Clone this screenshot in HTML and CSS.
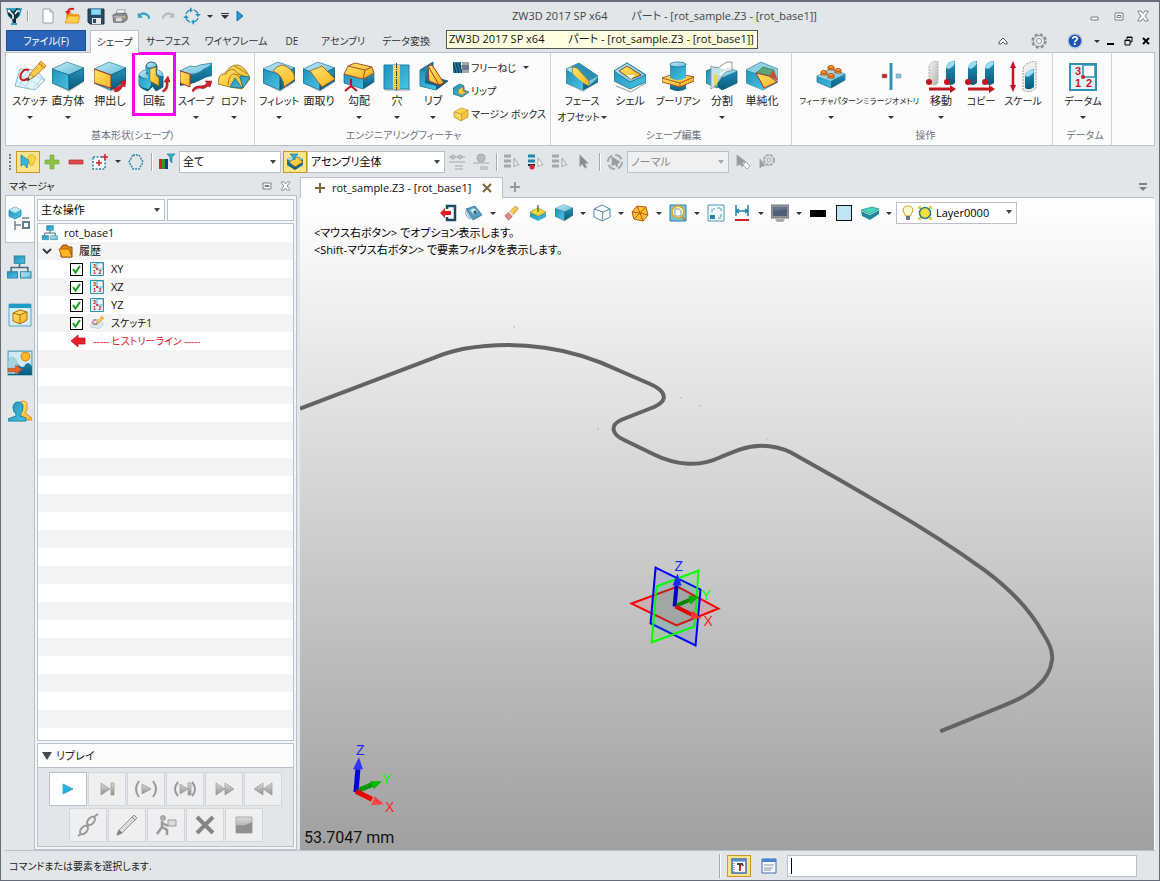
FILE: index.html
```html
<!DOCTYPE html>
<html lang="ja">
<head>
    <meta charset="utf-8">
    <meta name="viewport" content="width=device-width, initial-scale=1">
    <link rel="stylesheet" href="styles.css">
    <title>ZW3D 2017 SP x64</title>
</head>
<body>
    <!--SHARED GRADIENTS AND SYMBOLS-->
    <svg class="defs" width="0" height="0" aria-hidden="true">
        <defs>
            <linearGradient id="lt" x1="0" y1="0" x2="1" y2="1"><stop offset="0" stop-color="#c4eaf5"/><stop offset="1" stop-color="#62bedb"/></linearGradient>
            <linearGradient id="bl" x1="0" y1="0" x2="1" y2="1"><stop offset="0" stop-color="#2390b8"/><stop offset="1" stop-color="#48c4e6"/></linearGradient>
            <linearGradient id="dk" x1="0" y1="0" x2="0" y2="1"><stop offset="0" stop-color="#2593ba"/><stop offset="1" stop-color="#085a7c"/></linearGradient>
            <linearGradient id="gd" x1="0" y1="0" x2="1" y2="1"><stop offset="0" stop-color="#ffe66e"/><stop offset="1" stop-color="#fbb31c"/></linearGradient>
            <linearGradient id="gy" x1="0" y1="0" x2="1" y2="1"><stop offset="0" stop-color="#f4f4f4"/><stop offset="1" stop-color="#b4b4b4"/></linearGradient>
            <linearGradient id="rv" x1="0" y1="0" x2="0" y2="1"><stop offset="0" stop-color="#dcdcdc"/><stop offset="1" stop-color="#8f8f8f"/></linearGradient>
        </defs>
        <symbol id="box" viewBox="0 0 32 32">
            <path d="M1 23L17 31 32 21 17 27z" fill="#999" opacity=".5"/>
            <path d="M0 8L15 1 32 7 17 14z" fill="url(#lt)" stroke="#2c7f9c" stroke-width=".7"/>
            <path d="M0 8L17 14V29L0 22z" fill="url(#bl)" stroke="#0f6485" stroke-width=".7"/>
            <path d="M17 14L32 7V20L17 29z" fill="url(#dk)" stroke="#0a5270" stroke-width=".7"/>
        </symbol>
        <symbol id="sketch" viewBox="0 0 32 32">
            <path d="M6 8L22 9 31 19 21 29 1 25z" fill="#e3f3fa" stroke="#6ba8c4" stroke-width=".8"/>
            <path d="M4 14L25 24M9 8L30 19M3 20L16 28M14 9L5 25M21 10L11 27M28 17L18 29" stroke="#a9d3e5" stroke-width=".8"/>
            <path d="M15 9C9 7 5 14 7 18 9 21 13 18 14 17" fill="none" stroke="#c8141c" stroke-width="2"/>
            <path d="M13 20L16 13 27 0 32 5 20 16z" fill="url(#gd)" stroke="#b56a1c" stroke-width=".8"/>
            <path d="M13 20L16 13 20 16z" fill="#f8d9a8" stroke="#8b5a2b" stroke-width=".6"/>
            <path d="M13 20L14 17 16 18z" fill="#222"/>
            <path d="M25 2L30 7" stroke="#d9822b" stroke-width="1.5"/>
        </symbol>
        <symbol id="datum" viewBox="0 0 28 28">
            <path d="M1 1H27V27H1z" fill="#dff3fb" stroke="#2e92b6" stroke-width="2"/>
            <path d="M14 2H26V14H14z" fill="#fff" stroke="#2e92b6" stroke-width="1.500"/>
            <circle cx="14" cy="14" r="2" fill="#d2131b"/>
        </symbol>
        <symbol id="tree" viewBox="0 0 24 24">
            <path d="M12 8V12M4 16V12H20V16" fill="none" stroke="#4a6b80" stroke-width="1.500"/>
            <path d="M7 1H17V8H7z" fill="url(#bl)" stroke="#2386a9"/>
            <path d="M0 16H10V22H0z" fill="url(#bl)" stroke="#2386a9"/>
            <path d="M13 16H23V22H13z" fill="url(#lt)" stroke="#2386a9"/>
        </symbol>
        <symbol id="close" viewBox="0 0 12 12">
            <path d="M1 1H4L6 3.500 8 1H11V2L8 6 11 10V11H8L6 8.500 4 11H1V10L4 6 1 2z" fill="#fff" stroke="#7b7d80"/>
        </symbol>
        <symbol id="cursor" viewBox="0 0 12 18">
            <path d="M1 1V15L4 12 7 17 9 16 7 11H11z"/>
        </symbol>
    </svg>

    <div class="window">
        <!--TITLE BAR-->
        <header class="titlebar">
            <div class="quick">
                <svg class="logo" width="18" height="18" viewBox="0 0 18 18"><path d="M1 1H17L15 9 11 12H6L3 9z" fill="#2da4cc"/><path d="M2 3L5 2 8 5 12 1 16 3 13 10 11 12V16L8 17 7 12 3 8z" fill="#14303f"/><path d="M4 4L8 8V12M13 3L10 7" stroke="#fff" stroke-width="1.500" fill="none"/><circle cx="4" cy="4" r="1.500" fill="#fff"/><circle cx="14" cy="4" r="1.500" fill="#7ecfe8"/><path d="M6 17H12" stroke="#2da4cc" stroke-width="2"/></svg>
                <span class="divider"></span>
                <button class="icon-button" aria-label="新規"><svg width="18" height="18" viewBox="0 0 18 18"><path d="M4 2H11L14 5V16H4z" fill="#fff" stroke="#9aa0a8"/><path d="M11 2V5H14" fill="none" stroke="#9aa0a8"/></svg></button>
                <button class="icon-button" aria-label="開く"><svg width="18" height="18" viewBox="0 0 18 18"><path d="M3 6H9L10 7H16V16H3z" fill="#f0a01c"/><path d="M2 16L5 9H17L15 16z" fill="#ffcf4a" stroke="#d98a12" stroke-width=".7"/><path d="M11 2Q5 1 5 5" fill="none" stroke="#d2232a" stroke-width="2"/><path d="M2 4L5 8 8 4z" fill="#d2232a"/></svg></button>
                <button class="icon-button" aria-label="保存"><svg width="18" height="18" viewBox="0 0 18 18"><path d="M1 2H17V17H3L1 15z" fill="#2a4a66" stroke="#16303f"/><path d="M4 2H14V8H4z" fill="#4fc0e8"/><path d="M5 4H13M5 6H13" stroke="#d9f2fb"/><path d="M5 11H14V17H5z" fill="#e7e7e7"/><path d="M6 12H9V16H6z" fill="#2a4a66"/></svg></button>
                <button class="icon-button" aria-label="印刷"><svg width="16" height="16" viewBox="0 0 18 18"><path d="M6 2H15L13 8H4z" fill="#f5f5f5" stroke="#999"/><path d="M1 8L5 6H16L17 9V13L13 16H2z" fill="#8d8d8d" stroke="#666"/><path d="M2 10H13" stroke="#ccc"/><path d="M5 11H11V15H4z" fill="#ddd"/><circle cx="14" cy="10" r="1" fill="#e7d13a"/></svg></button>
                <button class="icon-button" aria-label="元に戻す"><svg width="16" height="16" viewBox="0 0 18 18"><path d="M4 8Q9 4 14 9L15 12" fill="none" stroke="#3aa0c6" stroke-width="2.500"/><path d="M2 5V11H8z" fill="#3aa0c6"/></svg></button>
                <button class="icon-button" aria-label="やり直し"><svg width="16" height="16" viewBox="0 0 18 18"><path d="M14 8Q9 4 4 9L3 12" fill="none" stroke="#b7bbc0" stroke-width="2.500"/><path d="M16 5V11H10z" fill="#b7bbc0"/></svg></button>
                <button class="icon-button" aria-label="再生成"><svg width="18" height="18" viewBox="0 0 18 18"><g fill="none" stroke="#2e9ac4" stroke-width="1.500"><path d="M3 7Q4 4 7 3M11 3Q14 4 15 7M15 11Q14 14 11 15M7 15Q4 14 3 11"/></g><path d="M7 0L10 3 7 6zM18 7L15 10 12 7zM11 18L8 15 11 12zM0 11L3 8 6 11z" fill="#2e9ac4"/></svg></button>
                <button class="caret-button" aria-label="再生成オプション"><span class="caret"></span></button>
                <button class="caret-button bar" aria-label="カスタマイズ"><span class="caret"></span></button>
                <button class="caret-button" aria-label="実行"><svg width="8" height="12" viewBox="0 0 8 12"><path d="M1 1L7 6 1 11z" fill="#1f9be0" stroke="#1377b8"/></svg></button>
            </div>
            <h1 class="title">ZW3D 2017 SP x64<span>パート - [rot_sample.Z3 - [rot_base1]]</span></h1>
            <div class="window-buttons">
                <button class="icon-button" aria-label="最小化"><svg width="10" height="12" viewBox="0 0 10 12"><path d="M1 7H8V10H1z" fill="#fff" stroke="#7b7d80"/></svg></button>
                <button class="icon-button" aria-label="最大化"><svg width="10" height="10" viewBox="0 0 10 10"><path d="M1 2H9V9H1z" fill="#fff" stroke="#7b7d80"/><path d="M3 4.500H7V6.500H3z" fill="none" stroke="#7b7d80"/></svg></button>
                <button class="icon-button" aria-label="閉じる"><svg width="12" height="12"><use href="#close"/></svg></button>
            </div>
        </header>

        <!--RIBBON TABS-->
        <nav class="tabs">
            <button class="tab file">ファイル(F)</button>
            <button class="tab active">シェープ</button>
            <button class="tab">サーフェス</button>
            <button class="tab">ワイヤフレーム</button>
            <button class="tab narrow">DE</button>
            <button class="tab short">アセンブリ</button>
            <button class="tab">データ変換</button>
            <div class="tab-tools">
                <button class="icon-button" aria-label="リボンを隠す"><svg width="10" height="8" viewBox="0 0 10 8"><path d="M1 5L5 1 9 5V7H7L5 5 3 7H1z" fill="#fff" stroke="#555"/></svg></button>
                <button class="icon-button" aria-label="設定"><svg width="16" height="16" viewBox="0 0 16 16"><circle cx="8" cy="8" r="6.500" fill="none" stroke="#8e9194" stroke-width="2.500" stroke-dasharray="3 2.100"/><circle cx="8" cy="8" r="5.500" fill="#e8e8e8" stroke="#8e9194"/><circle cx="8" cy="8" r="2.500" fill="#fff" stroke="#8e9194"/></svg></button>
                <button class="icon-button" aria-label="ヘルプ"><svg width="16" height="16" viewBox="0 0 16 16"><circle cx="8" cy="8" r="7" fill="#1c50b4" stroke="#b9c7dd" stroke-width="1.500"/><text class="help" x="8" y="12">?</text></svg></button>
                <button class="caret-button" aria-label="ヘルプメニュー"><span class="caret"></span></button>
                <button class="mini" aria-label="文書を最小化"><svg width="8" height="10" viewBox="0 0 8 10"><path d="M1 8H8" stroke="#000" stroke-width="2"/></svg></button>
                <button class="mini" aria-label="文書を復元"><svg width="9" height="10" viewBox="0 0 9 10"><path d="M3 3V1H8V6H6M3 1.500H8" fill="none" stroke="#000"/><path d="M1 4H6V9H1zM1 4.500H6" fill="none" stroke="#000"/></svg></button>
                <button class="mini" aria-label="文書を閉じる"><svg width="8" height="8" viewBox="0 0 8 8"><path d="M1 1L7 7M7 1L1 7" stroke="#000" stroke-width="2"/></svg></button>
            </div>
            <div class="tooltip" role="tooltip">ZW3D 2017 SP x64<span>パート - [rot_sample.Z3 - [rot_base1]]</span></div>
        </nav>

        <!--RIBBON-->
        <section class="ribbon">
            <div class="group">
                <div class="tools">
                    <button class="tool w36"><svg width="32" height="32"><use href="#sketch"/></svg><span class="kana">スケッチ</span><i class="caret"></i></button>
                    <button class="tool w40"><svg width="32" height="32"><use href="#box"/></svg><span>直方体</span><i class="caret"></i></button>
                    <button class="tool w44"><svg width="32" height="32" viewBox="0 0 32 32"><use href="#box"/><path d="M0 8L17 14V27L0 22z" fill="url(#gd)" stroke="#a8322a"/><path d="M19 27Q26 26 28 23L26 21 32 19 31 26 29 25Q26 31 21 31z" fill="#d0202a" stroke="#8a1016" stroke-width=".5"/></svg><span>押出し</span></button>
                    <button class="tool w44 marked"><svg width="32" height="32" viewBox="0 0 32 32"><path d="M1 14Q2 10 8 9V5Q9 1 13 1 18 1 19 5V9Q25 10 25 15V26L18 30 15 26V25L10 30Q1 27 1 23z" fill="url(#dk)" stroke="#0b4f6d" stroke-width=".8"/><path d="M1 14Q2 10 8 9V13L13 16Q8 20 1 14z" fill="url(#lt)"/><path d="M8 5Q9 1 13 1 18 1 19 5L14 7Q10 8 8 5z" fill="url(#lt)" stroke="#0b4f6d" stroke-width=".7"/><path d="M19 9Q25 10 25 15L22 15 19 13z" fill="url(#lt)"/><path d="M8 6Q10 8 13 8V24L11 28Q3 27 1 23V16Q5 19 10 17V12L8 11z" fill="url(#bl)"/><path d="M12 8L18 6V14L21 17V25L12 20z" fill="url(#gd)" stroke="#8a5a13" stroke-width=".6"/><path d="M24 30Q29 27 28 21H26L30 15 32 21H30Q31 28 26 31z" fill="#d0202a" stroke="#8a1016" stroke-width=".5"/></svg><span>回転</span></button>
                    <button class="tool w40"><svg width="32" height="32" viewBox="0 0 32 32"><path d="M0 10L10 5Q15 7 20 4L32 2 32 15Q25 16 21 19 15 22 10 23L0 25z" fill="url(#dk)"/><path d="M0 10L10 5Q15 7 20 4L32 2Q30 6 24 8 17 14 10 13z" fill="url(#lt)" stroke="#27809f" stroke-width=".7"/><path d="M0 10L10 13V26L0 22z" fill="url(#gd)" stroke="#a8322a"/><path d="M12 29Q16 24 20 25 25 25 27 22L25 20 32 20 30 26 28 25Q24 29 20 27 16 27 13 31z" fill="#d0202a" stroke="#8a1016" stroke-width=".5"/></svg><span class="kana">スイープ</span><i class="caret"></i></button>
                    <button class="tool w36"><svg width="32" height="32" viewBox="0 0 32 32"><path d="M0 23Q0 13 6 13 13 3 20 4 28 6 32 18L24 28 12 26z" fill="url(#gd)" stroke="#8f6413" stroke-width=".8"/><path d="M10 24Q11 12 17 13 23 14 25 27M7 14Q14 3 20 13L32 17M16 5Q25 9 29 13" fill="none" stroke="#8f6413" stroke-width=".8"/><path d="M12 26L17 17 24 27zM22 15L32 16 25 27z" fill="url(#bl)" stroke="#0f6485" stroke-width=".7"/></svg><span class="kana">ロフト</span><i class="caret"></i></button>
                </div>
                <h2>基本形状(シェープ)</h2>
            </div>

            <div class="group g2">
                <div class="tools">
                    <button class="tool w40"><svg width="32" height="32" viewBox="0 0 32 32"><use href="#box"/><path d="M10 10Q13 5 19 4 31 7 32 18L21 26Q20 14 10 10z" fill="url(#gd)" stroke="#a8502a" stroke-width=".8"/></svg><span class="kana">フィレット</span><i class="caret"></i></button>
                    <button class="tool w40"><svg width="32" height="32" viewBox="0 0 32 32"><use href="#box"/><path d="M7 10L19 5 32 18 19 26z" fill="url(#gd)" stroke="#a8502a" stroke-width=".8"/></svg><span>面取り</span></button>
                    <button class="tool w40"><svg width="32" height="32" viewBox="0 0 32 32"><path d="M1 13L20 18 31 12V21L20 28 1 22z" fill="url(#bl)" stroke="#0f6485" stroke-width=".7"/><path d="M20 18L31 12V21L20 28z" fill="url(#dk)"/><path d="M1 13L5 5 12 2 29 6 31 12 20 18z" fill="url(#gd)" stroke="#a8502a"/><path d="M5 5L22 9 20 18M22 9L29 6" fill="none" stroke="#a8502a"/><path d="M8 18V25M8 25L2 30M8 25L14 30" stroke="#b8131c" stroke-width="2"/></svg><span>勾配</span><i class="caret"></i></button>
                    <button class="tool w36"><svg width="32" height="32" viewBox="0 0 32 32"><path d="M3 4H28V28H3z" fill="url(#bl)" stroke="#1a7fa8"/><path d="M12 4H19V28H12z" fill="url(#gd)"/><path d="M15.500 2V30" stroke="#444" stroke-dasharray="5 1 1 1"/><path d="M4 29H29V28" stroke="#999" fill="none"/></svg><span>穴</span><i class="caret"></i></button>
                    <button class="tool w36"><svg width="32" height="32" viewBox="0 0 32 32"><path d="M3 9L16 1V16L31 20 19 29 3 25z" fill="url(#dk)" stroke="#0b4f6d" stroke-width=".8"/><path d="M3 9L8 11V22L19 25V29L3 25z" fill="url(#bl)"/><path d="M11 5L15 4 27 22 22 24 12 20z" fill="url(#gd)" stroke="#a8322a"/><path d="M11 5L22 24" stroke="#a8322a"/></svg><span>リブ</span><i class="caret"></i></button>
                    <div class="stack">
                        <button><svg width="16" height="16" viewBox="0 0 16 16"><path d="M0 2L8 2V13H0z" fill="#2386a9"/><path d="M0 3L3 13M3 3L6 13M6 3L9 13" stroke="#0b3f5a" stroke-width="1.500"/><path d="M9 2H16V13H9z" fill="#a4a8ab"/><path d="M8 5L16 5V10H10z" fill="#6a7a86"/></svg>フリーねじ<i class="caret"></i></button>
                        <button><svg width="16" height="16" viewBox="0 0 16 16"><path d="M0 5L7 1 11 3V7L16 9 9 14 0 11z" fill="url(#bl)" stroke="#0f6485" stroke-width=".7"/><path d="M6 6L10 4V8L14 9 9 12 5 10z" fill="url(#gd)" stroke="#b0702a" stroke-width=".7"/></svg>リップ</button>
                        <button><svg width="16" height="16" viewBox="0 0 16 16"><path d="M1 6L8 2 15 4V11L8 15 1 11z" fill="url(#gd)" stroke="#c49a35" stroke-width=".8"/><path d="M1 6L9 8 15 4M9 8L8 15" fill="none" stroke="#c49a35" stroke-width=".8"/><path d="M4 9L7 10V13" stroke="#fff3b0" fill="none"/></svg>マージン ボックス</button>
                    </div>
                </div>
                <h2>エンジニアリングフィーチャ</h2>
            </div>

            <div class="group g3">
                <div class="tools">
                    <button class="tool w48"><svg width="32" height="32" viewBox="0 0 32 32"><path d="M1 23L17 31 32 21 17 27z" fill="#999" opacity=".5"/><path d="M0 8L13 2 32 15V21L17 29 0 22z" fill="url(#lt)" stroke="#0f6485" stroke-width=".7"/><path d="M13 2L32 15 23 20 5 6z" fill="#2d8fb2"/><path d="M6 6L11 7 23 20V26L7 15z" fill="url(#gd)" stroke="#8a7a3a" stroke-width=".8"/><path d="M0 8L6 12 17 22V29L0 22z" fill="url(#bl)"/><path d="M17 22L23 25 32 16V21L17 29z" fill="url(#dk)"/></svg><span class="kana">フェース</span><span class="kana">オフセット<i class="caret"></i></span></button>
                    <button class="tool w48"><svg width="32" height="32" viewBox="0 0 32 32"><path d="M2 25L17 31 32 22" fill="none" stroke="#999"/><path d="M0 10L13 2 32 14V21L16 28 0 20z" fill="url(#bl)" stroke="#0f6485" stroke-width=".7"/><path d="M0 10L13 2 32 14 16 21z" fill="url(#lt)" stroke="#0f6485" stroke-width=".7"/><path d="M5 10L13 5 27 14 17 18z" fill="url(#gd)" stroke="#8a4d13"/><path d="M12 14L21 14 17 18z" fill="#fff"/></svg><span>シェル</span></button>
                    <button class="tool w48"><svg width="32" height="32" viewBox="0 0 32 32"><path d="M8 22V28Q16 32 24 28V22z" fill="url(#dk)"/><path d="M0 17L14 12 32 16V20L18 26 0 21z" fill="url(#gd)" stroke="#a8502a"/><path d="M0 17L18 22 32 16M18 22V26" fill="none" stroke="#a8502a"/><path d="M8 3V17Q16 21 24 17V3z" fill="url(#bl)"/><ellipse cx="16" cy="3.500" rx="8" ry="2.500" fill="url(#lt)" stroke="#0f6485" stroke-width=".7"/></svg><span class="kana">ブーリアン</span></button>
                    <button class="tool w40"><svg width="32" height="32" viewBox="0 0 32 32"><path d="M0 10L9 6 18 9V20L11 27 0 22z" fill="url(#bl)" stroke="#0f6485" stroke-width=".7"/><path d="M12 13L22 7 31 10V22L16 29 12 26z" fill="url(#dk)" stroke="#0b4f6d" stroke-width=".7"/><path d="M12 13L22 7 31 10 17 16z" fill="url(#lt)"/><path d="M5 5Q12 9 16 4 20 0 26 1V10Q20 9 17 14L10 24 5 28z" fill="#fff" fill-opacity=".7" stroke="#9a9a9a"/><path d="M8 14L11 13V24H8z" fill="#f9cf5c"/></svg><span>分割</span><i class="caret"></i></button>
                    <button class="tool w40"><svg width="32" height="32" viewBox="0 0 32 32"><path d="M0 9L15 1 32 8V21L17 29 0 22z" fill="#8fd0e4" stroke="#3b8ca8" stroke-width=".8"/><path d="M0 9L10 12 19 29 0 22z" fill="url(#bl)"/><path d="M10 12L17 6 28 9 23 15z" fill="#5ba47c" stroke="#3a7a50" stroke-width=".7"/><path d="M10 12L23 15 31 21 18 27z" fill="url(#gd)" stroke="#a8322a"/><path d="M23 15L28 9 32 20z" fill="#c45038"/></svg><span>単純化</span></button>
                </div>
                <h2>シェープ編集</h2>
            </div>

            <div class="group g4">
                <div class="tools">
                    <button class="tool w60"><svg width="32" height="32" viewBox="0 0 32 32"><path d="M2 15L16 8 30 13V19L16 27 2 21z" fill="url(#bl)" stroke="#0f6485" stroke-width=".7"/><path d="M2 15L16 8 30 13 16 20z" fill="url(#lt)"/><path d="M16 20L30 13V19L16 27z" fill="url(#dk)"/><g fill="#fba51c" stroke="#b03a18" stroke-width=".8"><path d="M13 6V9H19V6zM6 11V14H12V11zM20 9V12H26V9zM13 14V17H19V14z"/><ellipse cx="16" cy="6" rx="3" ry="1.500"/><ellipse cx="9" cy="11" rx="3" ry="1.500"/><ellipse cx="23" cy="9" rx="3" ry="1.500"/><ellipse cx="16" cy="14" rx="3" ry="1.500"/></g></svg><span class="long">フィーチャパターン</span><i class="caret"></i></button>
                    <button class="tool w60"><svg width="32" height="32" viewBox="0 0 32 32"><path d="M16 2V29" stroke="#2f93bd" stroke-width="3"/><path d="M7 13H12V17H7z" fill="#d0202a" stroke="#999" stroke-width=".6"/><path d="M21 13H26V17H21z" fill="#7fc4e0" stroke="#999" stroke-width=".6"/></svg><span class="long">ミラージオメトリ</span><i class="caret"></i></button>
                    <button class="tool w40"><svg width="32" height="32" viewBox="0 0 32 32"><path d="M4 22V5Q6 0 13 0V22Q9 26 4 22z" fill="url(#gy)" stroke="#aaa" stroke-dasharray="2 1"/><path d="M21 22V6Q23 0 30 0V22Q26 26 21 22z" fill="url(#dk)"/><ellipse cx="25.500" cy="4" rx="5" ry="2.500" fill="#9bdcf0" transform="rotate(-38 25.500 4)"/><path d="M4 26.500H25V24L31 28 25 32V29.500H4z" fill="#c4161f"/><circle cx="4" cy="21" r="3" fill="#c4161f"/><circle cx="22" cy="21" r="3" fill="#c4161f"/></svg><span>移動</span><i class="caret"></i></button>
                    <button class="tool w40"><svg width="32" height="32" viewBox="0 0 32 32"><path d="M3 22V6Q5 0 12 0V22Q8 26 3 22zM20 22V6Q22 0 29 0V22Q25 26 20 22z" fill="url(#dk)"/><ellipse cx="7.500" cy="4" rx="5" ry="2.500" fill="#9bdcf0" transform="rotate(-38 7.500 4)"/><ellipse cx="24.500" cy="4" rx="5" ry="2.500" fill="#9bdcf0" transform="rotate(-38 24.500 4)"/><path d="M3 26.500H24V24L30 28 24 32V29.500H3z" fill="#c4161f"/><circle cx="3" cy="21" r="3" fill="#c4161f"/><circle cx="20" cy="21" r="3" fill="#c4161f"/></svg><span class="kana">コピー</span></button>
                    <button class="tool w44"><svg width="32" height="32" viewBox="0 0 32 32"><path d="M6 6V25" stroke="#c4161f" stroke-width="2.500"/><path d="M3 7L6 0 9 7zM3 24L6 31 9 24z" fill="#c4161f"/><path d="M16 29V8Q18 1 29 0V27Q23 33 16 29z" fill="#eee" stroke="#999" stroke-dasharray="2 1"/><path d="M18 27V14Q20 9 27 8V26Q22 30 18 27z" fill="url(#dk)"/><ellipse cx="22.500" cy="12" rx="5" ry="2.500" fill="#9bdcf0" transform="rotate(-38 22.500 12)"/></svg><span class="kana">スケール</span></button>
                </div>
                <h2>操作</h2>
            </div>

            <div class="group g5">
                <div class="tools">
                    <button class="tool w44"><svg class="datum-icon" width="28" height="28" viewBox="0 0 28 28"><use href="#datum"/><g class="datum-text"><text x="6" y="12">3</text><text x="6" y="24">1</text><text x="17" y="24">2</text></g></svg><span class="kana">データム</span><i class="caret"></i></button>
                </div>
                <h2>データム</h2>
            </div>
        </section>

        <!--SELECTION TOOLBAR-->
        <div class="toolbar">
            <span class="grip"></span>
            <button class="icon-button on" aria-label="選択"><svg width="18" height="18" viewBox="0 0 18 18"><path d="M2 2V13L5 11 8 15 9 10 12 9z" fill="#37b5da" stroke="#137ca3" stroke-width=".7"/><path d="M9 4A4 4 0 1 1 15 9L14 12H11L10 8z" fill="#ffd84a" stroke="#d59b15" stroke-width=".7"/></svg></button>
            <button class="icon-button" aria-label="追加"><svg width="16" height="16" viewBox="0 0 16 16"><path d="M6 1H10V6H15V10H10V15H6V10H1V6H6z" fill="#8bc53f" stroke="#7aa84a" stroke-width=".7"/></svg></button>
            <button class="icon-button" aria-label="除去"><svg width="16" height="16" viewBox="0 0 16 16"><path d="M1 6H15V10H1z" fill="#dd4a4c" stroke="#b5282e" stroke-width=".7"/></svg></button>
            <button class="icon-button" aria-label="ボックス選択"><svg width="16" height="16" viewBox="0 0 16 16"><path d="M1 3H13V15H1z" fill="#fff" stroke="#2386a9" stroke-dasharray="2 1.500" stroke-width="1.500"/><path d="M7 6V12M4 9H10M13 0V6M10 3H16" stroke="#d2232a" stroke-width="1.500"/></svg></button>
            <button class="caret-button" aria-label="選択方法"><span class="caret"></span></button>
            <button class="icon-button" aria-label="多角形選択"><svg width="16" height="16" viewBox="0 0 16 16"><path d="M5 1H11L15 8 11 15H5L1 8z" fill="none" stroke="#2a8bb0" stroke-width="1.500" stroke-dasharray="2 1"/></svg></button>
            <span class="divider"></span>
            <button class="icon-button" aria-label="色フィルタ"><svg width="18" height="18" viewBox="0 0 18 18"><path d="M1 6H4V16H1z" fill="#d2232a"/><path d="M4 6H7V16H4z" fill="#35932c"/><path d="M7 6H10V16H7z" fill="#1c3a8e"/><path d="M9 1H17L14 4V10L12 8V4z" fill="#36aed4" stroke="#1b7b9c" stroke-width=".7"/></svg></button>
            <label class="combo c102"><select aria-label="フィルタ"><option>全て</option></select></label>
            <button class="icon-button on" aria-label="範囲"><svg width="18" height="18" viewBox="0 0 18 18"><path d="M1 6L9 2 17 6V12L9 17 1 12z" fill="url(#dk)"/><path d="M1 6L9 2 17 6 9 11z" fill="url(#lt)"/><path d="M3 9L11 4 17 9 9 14z" fill="url(#gd)" stroke="#8a5a13" stroke-width=".7"/><path d="M4 1H12L9 4V7L7 6V4z" fill="#36aed4" stroke="#1b7b9c" stroke-width=".7"/></svg></button>
            <label class="combo c138"><select aria-label="選択範囲"><option>アセンブリ全体</option></select></label>
            <button class="icon-button off" aria-label="参照" disabled><svg width="18" height="18" viewBox="0 0 18 18"><path d="M1 4H17M1 9H17M7 13H15M7 16H15"/><circle cx="5" cy="4" r="2"/><circle cx="12" cy="4" r="2"/></svg></button>
            <button class="icon-button off" aria-label="外部参照" disabled><svg width="18" height="18" viewBox="0 0 18 18"><path d="M1 10H17M8 14H16M8 16H16"/><circle cx="9" cy="5" r="4" fill="#bbb"/></svg></button>
            <span class="divider"></span>
            <button class="icon-button off" aria-label="リスト1" disabled><svg width="18" height="18" viewBox="0 0 18 18"><path d="M1 3H8M1 8H8M1 13H8" stroke-width="3"/><path d="M11 5V14L13 12 16 12z" fill="#eee"/></svg></button>
            <button class="icon-button" aria-label="リスト2"><svg width="18" height="18" viewBox="0 0 18 18"><path d="M1 3H8M1 8H8" stroke="#1d88ae" stroke-width="3"/><path d="M1 12H8" stroke="#17384a" stroke-width="2"/><circle cx="5" cy="14" r="2.500" fill="#d2232a"/><path d="M11 5V14L13 12 16 12z" fill="#fff" stroke="#aaa"/></svg></button>
            <button class="icon-button off" aria-label="リスト3" disabled><svg width="18" height="18" viewBox="0 0 18 18"><path d="M1 3H8M1 8H8M1 13H8" stroke-width="3"/><path d="M11 5V14L13 12 16 12z" fill="#eee"/></svg></button>
            <button class="icon-button off" aria-label="ポインタ" disabled><svg width="10" height="15"><use href="#cursor" fill="#8a8a8a"/></svg></button>
            <span class="divider"></span>
            <button class="icon-button off" aria-label="方向" disabled><svg width="18" height="18" viewBox="0 0 18 18"><circle cx="9" cy="9" r="7" stroke-width="2" stroke-dasharray="8 3"/><path d="M6 4V13L9 11 11 14 12 10 14 9z" fill="#999"/></svg></button>
            <label class="combo c102 disabled"><select aria-label="表示" disabled><option>ノーマル</option></select></label>
            <button class="icon-button off" aria-label="ピック" disabled><svg width="18" height="18" viewBox="0 0 18 18"><path d="M3 2V13L6 11 8 14 9 9H12z" fill="#999"/><path d="M9 12L12 9 16 13 13 16z" fill="#fff"/></svg></button>
            <button class="icon-button off" aria-label="ピック設定" disabled><svg width="18" height="18" viewBox="0 0 18 18"><circle cx="11" cy="7" r="5" stroke-width="2" stroke-dasharray="3 1"/><circle cx="11" cy="7" r="2"/><path d="M2 6V15L4 13 7 13z" fill="#999"/></svg></button>
        </div>

        <main class="main">
            <!--MANAGER-->
            <aside class="manager">
                <div class="manager-head">
                    <h2>マネージャ</h2>
                    <button class="mini" aria-label="フロート"><svg width="10" height="8" viewBox="0 0 10 8"><path d="M1 1H9V7H1z" fill="#fff" stroke="#7b7d80"/><path d="M3 3.500H7V4.500H3z" fill="none" stroke="#7b7d80"/></svg></button>
                    <button class="mini" aria-label="マネージャを閉じる"><svg width="11" height="10"><use href="#close"/></svg></button>
                </div>
                <div class="manager-body">
                    <nav class="side-tabs">
                        <button class="active" aria-label="履歴"><svg width="24" height="26" viewBox="0 0 24 26"><path d="M1 4L7 1 13 4V10L7 13 1 10z" fill="url(#bl)" stroke="#2a87a8" stroke-width=".8"/><path d="M1 4L7 1 13 4 7 7z" fill="#bfe8f5"/><path d="M14 12H21M7 15V24M7 19H13" stroke="#6a8496" stroke-width="1.500"/><path d="M15 16H21V22H15z" fill="#fff" stroke="#5f8096" stroke-width="2"/></svg></button>
                        <button aria-label="アセンブリ"><svg width="25" height="25"><use href="#tree"/></svg></button>
                        <button aria-label="ビュー"><svg width="24" height="24" viewBox="0 0 24 24"><path d="M1 1H23V23H1z" fill="#d5ecf5" stroke="#58a6c2"/><path d="M1 1H23V5H1z" fill="#1d9cc5"/><path d="M5 10L12 7 19 9V17L12 21 5 18z" fill="url(#gd)" stroke="#b06a13"/><path d="M5 10L12 12 19 9M12 12V21" fill="none" stroke="#b06a13"/></svg></button>
                        <button aria-label="ビジュアル"><svg width="26" height="26" viewBox="0 0 24 24"><path d="M1 1H23V23H1z" fill="#cdeaf5" stroke="#4d9cba"/><path d="M1 10Q5 3 8 9 12 18 16 15 19 9 23 15V23H1z" fill="url(#dk)"/><path d="M1 10Q5 3 8 9 12 16 10 22H1z" fill="#a7d3e2"/><circle cx="17" cy="6" r="4" fill="#fbb829" stroke="#d98610"/><path d="M1 17H8V14L14 18 8 22V20H1z" fill="#e8622a" stroke="#b8411a" stroke-width=".6"/></svg></button>
                        <button aria-label="ロール"><svg width="24" height="24" viewBox="0 0 24 24"><path d="M11 4Q15 0 19 4V11L17 14 24 19V21H14z" fill="url(#gd)" stroke="#d9902a"/><path d="M5 8Q6 3 10 3 15 3 15 8 15 13 12 15V17L18 19V22H0V20L8 17V15Q5 13 5 8z" fill="url(#bl)" stroke="#1a7fa8"/></svg></button>
                    </nav>
                    <div class="manager-content">
                        <div class="filter-row">
                            <label class="combo grow"><select aria-label="操作"><option>主な操作</option></select></label>
                            <input class="filter grow" type="text" aria-label="検索">
                        </div>
                        <ul class="tree">
                            <li><svg width="16" height="16"><use href="#tree"/></svg>rot_base1</li>
                            <li><svg width="10" height="8" viewBox="0 0 10 8"><path d="M1 2L5 6 9 2" fill="none" stroke="#333" stroke-width="1.800"/></svg><svg width="15" height="14" viewBox="0 0 15 14"><path d="M3 3L5 1H9L10 3H14V13H3z" fill="#d98a0c" stroke="#8f4a0c"/><path d="M1 5H11L14 13H4z" fill="#ffb91f" stroke="#b3620d"/></svg>履歴</li>
                            <li class="leaf"><input type="checkbox" id="xy" checked><svg width="14" height="14" viewBox="0 0 28 28"><use href="#datum"/><g class="datum-text"><text x="6" y="12">3</text><text x="6" y="24">1</text><text x="17" y="24">2</text></g></svg><label for="xy">XY</label></li>
                            <li class="leaf"><input type="checkbox" id="xz" checked><svg width="14" height="14" viewBox="0 0 28 28"><use href="#datum"/><g class="datum-text"><text x="6" y="12">3</text><text x="6" y="24">1</text><text x="17" y="24">2</text></g></svg><label for="xz">XZ</label></li>
                            <li class="leaf"><input type="checkbox" id="yz" checked><svg width="14" height="14" viewBox="0 0 28 28"><use href="#datum"/><g class="datum-text"><text x="6" y="12">3</text><text x="6" y="24">1</text><text x="17" y="24">2</text></g></svg><label for="yz">YZ</label></li>
                            <li class="leaf"><input type="checkbox" id="sk" checked><svg width="14" height="14"><use href="#sketch"/></svg><label class="kana" for="sk">スケッチ1</label></li>
                            <li class="leaf history"><svg width="16" height="14" viewBox="0 0 16 14"><path d="M1 7L8 1V4H15V10H8V13z" fill="#e8222c" stroke="#b0101a" stroke-width=".7"/></svg>----- ヒストリーライン -----</li>
                        </ul>
                        <h3 class="replay-title"><svg width="10" height="8" viewBox="0 0 10 8"><path d="M0 0H10L5 8z" fill="#444a52"/></svg>リプレイ</h3>
                        <div class="replay">
                            <div class="replay-row">
                                <button aria-label="再生"><svg width="24" height="24" viewBox="0 0 24 24"><path d="M7 7L17 12 7 17z" fill="#22b4e0" stroke="#4fa8c4"/></svg></button>
                                <button aria-label="次へ" disabled><svg width="24" height="24" viewBox="0 0 24 24"><path d="M6 6L15 12 6 18zM16 6H19V18H16z" fill="url(#rv)" stroke="#999" stroke-width=".7"/></svg></button>
                                <button aria-label="部分再生" disabled><svg width="24" height="24" viewBox="0 0 24 24"><path d="M8 7L17 12 8 17z" fill="url(#rv)" stroke="#999" stroke-width=".7"/><path d="M5 4Q-1 12 5 20M19 4Q25 12 19 20" fill="none" stroke="#999" stroke-width="2"/></svg></button>
                                <button aria-label="部分送り" disabled><svg width="24" height="24" viewBox="0 0 24 24"><path d="M7 7L15 12 7 17zM15 6H18V18H15z" fill="url(#rv)" stroke="#999" stroke-width=".7"/><path d="M5 5Q-1 12 5 19M19 5Q25 12 19 19" fill="none" stroke="#999" stroke-width="2"/></svg></button>
                                <button aria-label="早送り" disabled><svg width="24" height="24" viewBox="0 0 24 24"><path d="M4 6L13 12 4 18zM13 6L22 12 13 18z" fill="url(#rv)" stroke="#999" stroke-width=".7"/></svg></button>
                                <button aria-label="巻き戻し" disabled><svg width="24" height="24" viewBox="0 0 24 24"><path d="M12 6L3 12 12 18zM21 6L12 12 21 18z" fill="url(#rv)" stroke="#999" stroke-width=".7"/></svg></button>
                            </div>
                            <div class="replay-row">
                                <button aria-label="リンク" disabled><svg width="24" height="24" viewBox="0 0 24 24"><g fill="none" stroke="#999" stroke-width="2"><ellipse cx="8" cy="17" rx="5" ry="3" transform="rotate(-50 8 17)"/><ellipse cx="15" cy="8" rx="5" ry="3" transform="rotate(-50 15 8)"/><path d="M18 4L22 1M5 21L2 23M10 14L13 11"/></g></svg></button>
                                <button aria-label="編集" disabled><svg width="24" height="24" viewBox="0 0 24 24"><path d="M2 22L4 17 19 2 22 5 7 20z" fill="#ddd" stroke="#999"/><path d="M17 4L20 7M2 22L4 17 7 20z" stroke="#888" fill="#888"/></svg></button>
                                <button aria-label="移動" disabled><svg width="24" height="24" viewBox="0 0 24 24"><circle cx="9" cy="5" r="3" fill="#aaa"/><path d="M8 8V14L3 21M8 14L13 17V22M8 10L14 13" fill="none" stroke="#999" stroke-width="2.500"/><path d="M14 7H22V13H14z" fill="#ddd" stroke="#999"/></svg></button>
                                <button aria-label="削除" disabled><svg width="24" height="24" viewBox="0 0 24 24"><path d="M4 4L20 20M20 4L4 20" stroke="#858585" stroke-width="4"/></svg></button>
                                <button aria-label="停止" disabled><svg width="24" height="24" viewBox="0 0 24 24"><path d="M4 4H20V20H4z" fill="url(#rv)" stroke="#aaa"/><path d="M4 12Q12 14 20 9V20H4z" fill="#8f8f8f"/></svg></button>
                            </div>
                        </div>
                    </div>
                </div>
            </aside>

            <!--DOCUMENT-->
            <section class="document">
                <div class="doc-tabs">
                    <div class="doc-tab"><svg width="10" height="10" viewBox="0 0 10 10"><path d="M5 0V10M0 5H10" stroke="#7a6638" stroke-width="2"/></svg><span>rot_sample.Z3 - [rot_base1]</span><button class="mini" aria-label="タブを閉じる"><svg width="10" height="10" viewBox="0 0 10 10"><path d="M1 1L9 9M9 1L1 9" stroke="#7a6638" stroke-width="2"/></svg></button></div>
                    <button class="icon-button" aria-label="新しいタブ"><svg width="10" height="10" viewBox="0 0 10 10"><path d="M5 0V10M0 5H10" stroke="#999" stroke-width="2"/></svg></button>
                    <button class="icon-button last" aria-label="タブ一覧"><svg width="10" height="8" viewBox="0 0 10 8"><path d="M1 1H9" stroke="#85807c" stroke-width="2"/><path d="M1 4H9L5 8z" fill="#85807c"/></svg></button>
                </div>
                <div class="viewport">
                    <svg class="scene" viewBox="300 198 855 652" preserveAspectRatio="xMinYMin meet">
                        <path d="M300 409L434 358Q446 353 464 349 505 342 545 348 582 353 620 371L650 384Q666 391 664 399 663 403 655 407L622 420Q613 424 614 430 615 436 624 440L655 455Q671 463 689 464 705 465 722 457L740 450Q766 441 792 453L840 480 888 508Q940 538 986 571 1026 601 1044 634 1054 649 1053 660 1051 676 1038 687 1028 697 1005 706L941 732" fill="none" stroke="#636363" stroke-width="4"/>
                        <path d="M681 398h1M700 406h1M514 327h1M598 429h1M767 439h1M686 469h1" stroke="#888"/>
                        <!--origin planes-->
                        <g fill-opacity=".1" stroke-width="2">
                            <path d="M632 604L678 587 719 609 677 626z" fill="#f00" stroke="#f00"/>
                            <path d="M656 568L701 590 696 646 651 624z" fill="#00f" stroke="#00f"/>
                            <path d="M657 587L699 571 695 627 652 643z" fill="#0f0" stroke="#0f0"/>
                        </g>
                        <g stroke-width="4">
                            <path d="M675 607L677 586" stroke="#00c"/><path d="M673 586L678 574 682 586z" fill="#22f"/>
                            <path d="M677 606L691 600" stroke="#080"/><path d="M689 596L700 597 691 605z" fill="#0a0"/>
                            <path d="M676 607L692 615" stroke="#d00"/><path d="M693 611L702 619 691 619z" fill="#f33"/>
                        </g>
                        <!--view triad-->
                        <g stroke-width="5">
                            <path d="M356 793L358 770" stroke="#00d"/><path d="M353 770L359 758 363 770z" fill="#33f"/>
                            <path d="M359 791L373 785" stroke="#090"/><path d="M370 782L382 782 374 790z" fill="#0b0"/>
                            <path d="M356 792L372 800" stroke="#e00"/><path d="M375 797L384 805 371 806z" fill="#f44"/>
                        </g>
                        <g class="axis">
                            <text x="675" y="571" fill="#22f">Z</text><text x="702" y="600" fill="#0f0">Y</text><text x="704" y="627" fill="#f22">X</text>
                            <text x="356" y="756" fill="#22f">Z</text><text x="382" y="785" fill="#0f0">Y</text><text x="385" y="813" fill="#f22">X</text>
                        </g>
                    </svg>
                    <div class="view-tools">
                        <button class="icon-button" aria-label="終了"><svg width="18" height="18" viewBox="0 0 18 18"><path d="M8 5V2H16V16H8V13" fill="none" stroke="#1b4c66" stroke-width="2.500"/><path d="M1 9L6 4V7H12V11H6V14z" fill="#e01b24"/></svg></button>
                        <button class="icon-button" aria-label="整列"><svg width="18" height="18" viewBox="0 0 18 18"><path d="M1 5L10 2 17 11 8 16z" fill="#4f9dc0" stroke="#2c6a8a" stroke-width=".7"/><path d="M5 6L9 4 13 8 8 10zM1 7L6 15 3 14 0 9z" fill="#d8edf5" stroke="#8bb8cb"/><circle cx="10" cy="8" r="1.500" fill="#1b4c66"/></svg></button><button class="caret-button" aria-label="整列メニュー"><span class="caret"></span></button>
                        <button class="icon-button" aria-label="消去"><svg width="16" height="16" viewBox="0 0 18 18"><path d="M3 11L13 1 16 4 7 15z" fill="url(#gd)" stroke="#8a6a3a" stroke-width=".7"/><path d="M5 9L7 7 11 11 9 13z" fill="#e4e4e4"/><path d="M1 12L5 9 9 13 5 17z" fill="#e88a8a" stroke="#a83a3a" stroke-width=".7"/></svg></button>
                        <button class="icon-button" aria-label="断面"><svg width="18" height="18" viewBox="0 0 18 18"><path d="M1 8L9 12 17 8V13L9 17 1 13z" fill="url(#bl)"/><path d="M1 8L9 4 17 8 9 12z" fill="#ffd83c" stroke="#a98a1c" stroke-width=".7"/><path d="M9 1V8" stroke="#35932c" stroke-width="1.500"/></svg></button>
                        <button class="icon-button" aria-label="シェーディング"><svg width="18" height="18"><use href="#box"/></svg></button><button class="caret-button" aria-label="表示メニュー"><span class="caret"></span></button>
                        <button class="icon-button" aria-label="ワイヤー"><svg width="18" height="18" viewBox="0 0 18 18"><path d="M1 5L9 1 17 5V13L9 17 1 13zM1 5L10 8 17 5M10 8L9 17" fill="#fff" stroke="#4d8aa5"/></svg></button><button class="caret-button" aria-label="ワイヤーメニュー"><span class="caret"></span></button>
                        <button class="icon-button" aria-label="ファセット"><svg width="18" height="18" viewBox="0 0 18 18"><path d="M1 8L6 2 15 3 17 11 12 17 3 15z" fill="#ffc32a" stroke="#c0541a"/><path d="M9 9L6 2M9 9L15 3M9 9L17 11M9 9L12 17M9 9L3 15M9 9L1 8" stroke="#c0541a"/></svg></button><button class="caret-button" aria-label="ファセットメニュー"><span class="caret"></span></button>
                        <button class="icon-button" aria-label="ズーム"><svg width="18" height="18" viewBox="0 0 18 18"><path d="M1 1H17V17H1z" fill="#7cc3df" stroke="#2a7ea1"/><path d="M12 12L16 16" stroke="#b08a3a" stroke-width="2"/><circle cx="9" cy="8" r="6" fill="#f7f0d0" stroke="#e3a51a" stroke-width="1.500"/><path d="M6 5H10L12 7V12H6z" fill="#fff" stroke="#7ba2b5"/></svg></button><button class="caret-button" aria-label="ズームメニュー"><span class="caret"></span></button>
                        <button class="icon-button" aria-label="ビュー配置"><svg width="18" height="18" viewBox="0 0 18 18"><path d="M1 1H17V17H1z" fill="#f3fbfe" stroke="#4f9ab8"/><path d="M3 11H8V15H3z" fill="#2884a8"/><path d="M5 8V5H8M10 4H14V8M14 10V14H11" fill="none" stroke="#4f9ab8" stroke-dasharray="3 1"/></svg></button>
                        <button class="icon-button" aria-label="寸法"><svg width="18" height="18" viewBox="0 0 18 18"><path d="M3 1V12M15 1V12M3 7H15M6 5L3 7 6 9M12 5L15 7 12 9" fill="none" stroke="#2483a8" stroke-width="1.500"/><path d="M2 16H16" stroke="#d2232a" stroke-width="2"/></svg></button><button class="caret-button" aria-label="寸法メニュー"><span class="caret"></span></button>
                        <button class="icon-button" aria-label="画面"><svg width="18" height="18" viewBox="0 0 18 18"><path d="M0 1H18V14H0z" fill="#8f9499" stroke="#777"/><path d="M2 3H16V12H2z" fill="#65738c"/><path d="M2 12V7L16 5V12z" fill="#516079"/><path d="M4 15H14L12 18H6z" fill="#a8a8a8"/></svg></button><button class="caret-button" aria-label="画面メニュー"><span class="caret"></span></button>
                        <button class="icon-button" aria-label="線色"><span class="swatch black"></span></button>
                        <button class="icon-button" aria-label="面色"><span class="swatch sky"></span></button>
                        <button class="icon-button" aria-label="レイヤー"><svg width="18" height="18" viewBox="0 0 18 18"><path d="M0 7L9 11 18 6V10L9 16 1 12z" fill="#2387a0"/><path d="M0 6L11 3 18 5 9 10z" fill="#43d6c0" stroke="#1b8a86" stroke-width=".7"/></svg></button><button class="caret-button" aria-label="レイヤーメニュー"><span class="caret"></span></button>
                        <div class="layer">
                            <svg width="12" height="16" viewBox="0 0 12 16"><path d="M3.500 11Q3 9 1.500 7 0 1 6 1 12 1 10.500 7 9 9 8.500 11z" fill="#fffbd0" stroke="#c9a71c"/><path d="M4 12H8M4 14H8" stroke="#3a5070" stroke-width="1.500"/></svg>
                            <svg width="14" height="14" viewBox="0 0 14 14"><path d="M0 0H3V3H0zM11 0H14V3H11zM0 11H3V14H0zM11 11H14V14H11z" fill="#e8d03a"/><circle cx="7" cy="7" r="5.500" fill="#f8e03a" stroke="#2b7696" stroke-width="1.500"/></svg>
                            <label class="combo"><select aria-label="レイヤー名"><option>Layer0000</option></select></label>
                        </div>
                    </div>
                    <p class="prompt">&lt;マウス右ボタン&gt; でオプション表示します。<br>&lt;Shift-マウス右ボタン&gt; で要素フィルタを表示します。</p>
                    <p class="measure">53.7047 mm</p>
                </div>
            </section>
        </main>

        <!--STATUS BAR-->
        <footer class="status">
            <p>コマンドまたは要素を選択します.</p>
            <span class="divider"></span>
            <button class="icon-button on" aria-label="ツール"><svg width="16" height="16" viewBox="0 0 16 16"><path d="M1 1H15V15H1z" fill="#fff" stroke="#3c6fb0" stroke-width="1.500"/><path d="M1 2.500H15" stroke="#4a86d0" stroke-width="2"/><path d="M3 5V14" stroke="#555" stroke-dasharray="1 1"/><path d="M6 6H11L12 8" fill="none" stroke="#444" stroke-width="2"/><path d="M9 7V13" stroke="#c02a2a" stroke-width="2"/></svg></button>
            <button class="icon-button" aria-label="出力"><svg width="16" height="16" viewBox="0 0 16 16"><path d="M1 1H15V15H1z" fill="#f5f9ff" stroke="#3c6fb0"/><path d="M1 2.500H15" stroke="#4a86d0" stroke-width="3"/><path d="M3 7H13M3 10H12M3 12H10" stroke="#8a94a0"/></svg></button>
            <div class="command"><input type="text" aria-label="コマンド"></div>
        </footer>
    </div>
</body>
</html>
```
FILE: styles.css
```css
*{
    box-sizing: border-box;
}
body{
    margin: 0;
    background-color: #e2e6e9;
    color: #222;
    font-family: "Open Sans", "Noto Sans CJK JP", sans-serif;
    font-size: 11px;
    line-height: 16px;
    font-feature-settings: "palt";
}
h1, h2, h3, p, ul{
    margin: 0;
    padding: 0;
    font-size: 11px;
    font-weight: normal;
}
button, input, select{
    margin: 0;
    padding: 0;
    border: 0;
    background: none;
    color: inherit;
    font: inherit;
    font-feature-settings: inherit;
}
svg{
    display: block;
    flex-shrink: 0;
}
.defs{
    position: absolute;
}
.datum-text{
    fill: #d2131b;
    font: bold 11px "Liberation Sans", sans-serif;
}
.help{
    fill: #fff;
    font: bold 12px "Liberation Sans", sans-serif;
    text-anchor: middle;
}
.window{
    display: flex;
    flex-direction: column;
    min-height: 100vh;
    padding: 0 4px;
    border: 1px solid #686c78;
    border-top-width: 2px;
}

/* shared controls */
.icon-button{
    display: flex;
    align-items: center;
    justify-content: center;
    width: 24px;
    height: 22px;
    flex-shrink: 0;
}
.icon-button.on{
    background-color: #fde38a;
    border: 1px solid #c8962c;
}
.off svg{
    fill: none;
    stroke: #a5a7a9;
}
.caret-button{
    display: flex;
    align-items: center;
    justify-content: center;
    width: 12px;
    height: 22px;
    flex-shrink: 0;
}
.mini{
    display: flex;
    align-items: center;
    justify-content: center;
    width: 18px;
    height: 18px;
}
.caret{
    width: 0;
    height: 0;
    border: 3px solid transparent;
    border-top-color: #333;
    border-bottom: 0;
}
.bar .caret{
    border-width: 4px;
    border-bottom: 0;
}
.bar{
    flex-direction: column;
    gap: 1px;
    margin: 0 3px;
}
.bar::before{
    content: "";
    width: 8px;
    height: 1px;
    background-color: #333;
}
.divider{
    width: 2px;
    height: 18px;
    border-left: 1px solid #a4a8b0;
    border-right: 1px solid #fff;
    flex-shrink: 0;
}
.combo{
    position: relative;
    display: flex;
    height: 22px;
    border: 1px solid #bcc1c9;
    background-color: #fff;
}
.combo select{
    width: 100%;
    padding: 0 16px 0 3px;
    appearance: none;
    color: #000;
    opacity: 1;
}
.combo::after{
    content: "";
    position: absolute;
    right: 4px;
    top: 8px;
    border: 3px solid transparent;
    border-top: 4px solid #444;
    border-bottom: 0;
    pointer-events: none;
}
.c102{
    width: 102px;
    margin-right: 2px;
}
.c138{
    width: 138px;
}
.combo.disabled{
    background-color: #f0f0f0;
}
.combo.disabled select{
    color: #8a8a8a;
}
.combo.disabled::after{
    border-top-color: #aaa;
}
.kana{
    font-size: 10px;
}

/* title bar */
.titlebar{
    display: flex;
    align-items: center;
    height: 28px;
}
.quick{
    display: flex;
    align-items: center;
}
.logo{
    margin-right: 4px;
}
.quick .divider{
    height: 12px;
    margin-right: 7px;
}
.title{
    flex: 1;
    text-align: center;
    color: #444;
}
.title span, .tooltip span{
    margin-left: 24px;
}
.window-buttons{
    display: flex;
}

/* ribbon tabs */
.tabs{
    position: relative;
    display: flex;
    height: 22px;
    padding-left: 1px;
}
.tab{
    width: 68px;
    color: #333;
    font-size: 10px;
    white-space: nowrap;
}
.tab.file{
    width: 80px;
    height: 21px;
    margin-right: 4px;
    border: 1px solid #1b4b93;
    background-color: #2a62b5;
    color: #fff;
}
.tab.active{
    z-index: 1;
    width: 49px;
    height: 23px;
    margin-right: -5px;
    border: 1px solid #b9bfcb;
    border-bottom: 0;
    background-color: #fcfcfc;
}
.tab.short{
    width: 58px;
}
.tab.narrow{
    width: 44px;
}
.tab-tools{
    display: flex;
    align-items: center;
    margin-left: auto;
}
.tab-tools .icon-button{
    width: 36px;
}
.tab-tools .caret-button{
    width: 8px;
}
.tooltip{
    position: absolute;
    left: 441px;
    top: 0;
    padding: 0 3px 1px 2px;
    border: 1px solid #555;
    background-color: #ffffe1;
    color: #111;
    white-space: nowrap;
}

/* ribbon */
.ribbon{
    display: flex;
    height: 94px;
    border: 1px solid #b9bfcb;
    background-color: #fcfcfc;
}
.group{
    display: flex;
    flex-direction: column;
    justify-content: space-between;
    padding: 0 2px 1px 6px;
    border-right: 1px solid #d0d4dc;
}
.g2{
    width: 296px;
    padding-left: 4px;
}
.g3{
    width: 241px;
    padding-left: 7px;
}
.g4{
    width: 261px;
    padding-left: 9px;
}
.g5{
    width: 59px;
    padding-left: 8px;
}
.group h2{
    text-align: center;
    color: #6b7180;
    font-size: 10px;
    line-height: 18px;
}
.tools{
    display: flex;
}
.tool{
    position: relative;
    display: flex;
    flex-direction: column;
    flex-shrink: 0;
    align-items: center;
    height: 72px;
    padding-top: 8px;
    white-space: nowrap;
}
.tool span{
    line-height: 16px;
}
.tool > .caret{
    margin-top: 7px;
}
.tool span .caret{
    display: inline-block;
    margin: 0 0 2px 1px;
}
.tool .long{
    font-size: 8px;
}
.datum-icon{
    margin: 2px 0;
}
.w36{
    width: 36px;
}
.w40{
    width: 40px;
}
.w44{
    width: 44px;
}
.w48{
    width: 48px;
}
.w60{
    width: 60px;
}
.marked::after{
    content: "";
    position: absolute;
    inset: -1px 0 9px;
    border: 3px solid #ff00f0;
}
.stack{
    padding: 3px 0 0 2px;
    font-size: 10px;
}
.stack button{
    display: flex;
    align-items: center;
    gap: 2px;
    height: 23px;
    white-space: nowrap;
}
.stack .caret{
    margin-left: 5px;
}

/* selection toolbar */
.toolbar{
    display: flex;
    align-items: center;
    height: 31px;
    padding-left: 4px;
}
.grip{
    width: 2px;
    height: 16px;
    margin-right: 5px;
    border-left: 2px dotted #7b7f8a;
}
.toolbar .divider{
    margin: 0 2px 0 3px;
}

/* manager */
.main{
    display: flex;
    flex: 1;
    gap: 3px;
}
.manager{
    display: flex;
    flex-direction: column;
    width: 292px;
}
.manager-head{
    display: flex;
    align-items: center;
    height: 18px;
    padding: 0 3px 0 4px;
}
.manager-head h2{
    flex: 1;
    font-size: 10px;
}
.manager-body{
    display: flex;
    flex: 1;
}
.side-tabs{
    display: flex;
    flex-direction: column;
    width: 29px;
}
.side-tabs button{
    display: flex;
    align-items: center;
    justify-content: center;
    height: 48px;
}
.side-tabs .active{
    border: 1px solid #b9bfcb;
    border-right: 0;
    background-color: #fcfcfc;
}
.manager-content{
    display: flex;
    flex: 1;
    flex-direction: column;
    padding: 3px 2px 2px;
    border: 1px solid #b9bfcb;
    background-color: #f3f5f7;
}
.filter-row{
    display: flex;
    gap: 2px;
}
.grow{
    flex: 1;
    min-width: 0;
}
.filter{
    height: 22px;
    border: 1px solid #b9bfcb;
    background-color: #fff;
}
.tree{
    flex: 1;
    margin-top: 2px;
    border: 1px solid #b9bfcb;
    background: repeating-linear-gradient(#fff 0 18px, #f4f4f4 18px 36px);
    list-style: none;
}
.tree li{
    display: flex;
    align-items: center;
    gap: 6px;
    height: 18px;
    padding-left: 4px;
    color: #111;
}
.tree .leaf{
    gap: 7px;
    padding-left: 32px;
}
.tree .history{
    color: #e8101a;
    font-size: 10px;
}
.tree input{
    width: 13px;
    height: 13px;
    border: 1px solid #000;
    appearance: none;
    background: #fff url("data:image/svg+xml,%3Csvg xmlns='http://www.w3.org/2000/svg' viewBox='0 0 11 11'%3E%3Cpath d='M2 5L4.500 8.500 9 2' fill='none' stroke='%2312a012' stroke-width='2'/%3E%3C/svg%3E");
}
.replay-title{
    display: flex;
    align-items: center;
    gap: 4px;
    height: 25px;
    margin-top: 2px;
    padding-left: 4px;
    border: 1px solid #b9bfcb;
    background-color: #fcfcfc;
}
.replay{
    display: flex;
    flex-direction: column;
    align-items: center;
    gap: 2px;
    padding: 4px 0;
    border: 1px solid #b9bfcb;
    border-top: 0;
    background-color: #e2e6e9;
}
.replay-row{
    display: flex;
    gap: 1px;
}
.replay-row button{
    display: flex;
    align-items: center;
    justify-content: center;
    width: 38px;
    height: 34px;
    border: 1px solid #b9bfcb;
    background-color: #fff;
}
.replay-row button:disabled{
    border-color: #d3d6da;
    background-color: #efefef;
}

/* document */
.document{
    display: flex;
    flex: 1;
    flex-direction: column;
}
.doc-tabs{
    display: flex;
    align-items: center;
    height: 20px;
}
.doc-tab{
    display: flex;
    align-items: center;
    gap: 7px;
    height: 21px;
    padding: 0 6px 0 14px;
    border: 1px solid #b9bfcb;
    border-bottom: 0;
    background-color: #fdfdfd;
    color: #111;
    z-index: 1;
}
.last{
    margin-left: auto;
}
.viewport{
    position: relative;
    flex: 1;
    border-top: 1px solid #b9bfcb;
    border-right: 1px solid #fff;
    background: linear-gradient(#fff, #a0a0a0);
}
.scene{
    position: absolute;
    inset: 0;
    width: 100%;
    height: 100%;
}
.axis{
    font: 14px "Liberation Sans", sans-serif;
}
.view-tools{
    position: relative;
    display: flex;
    align-items: center;
    padding: 4px 0 0 135px;
}
.view-tools .icon-button{
    width: 26px;
}
.swatch{
    width: 16px;
    height: 7px;
    background-color: #000;
}
.sky{
    height: 16px;
    border: 1px solid #111;
    background-color: #bfe5f4;
}
.layer{
    display: flex;
    align-items: center;
    gap: 4px;
    height: 22px;
    margin-left: 1px;
    padding-left: 5px;
    border: 1px solid #bcc1c9;
    background-color: #fff;
}
.layer .combo{
    width: 80px;
    border: 0;
    background: none;
}
.layer select{
    padding-left: 0;
}
.prompt{
    position: relative;
    padding-left: 14px;
    color: #000;
    font-size: 11px;
    line-height: 17px;
}
.measure{
    position: absolute;
    left: 4px;
    bottom: 2px;
    color: #111;
    font: 16px/20px Roboto, sans-serif;
}

/* status bar */
.status{
    display: flex;
    align-items: center;
    gap: 6px;
    height: 30px;
    border-top: 1px solid #b9bfcb;
}
.status p{
    flex: 5;
    padding-left: 4px;
    font-size: 10px;
}
.status .divider{
    height: 24px;
}
.command{
    display: flex;
    flex: 3;
    max-width: 350px;
    height: 22px;
    margin-right: 18px;
    padding-left: 3px;
    border: 1px solid #b9bfcb;
    background-color: #fff;
}
.command input{
    width: 100%;
    height: 16px;
    margin-top: 2px;
    border-left: 1px solid #000;
}
```
